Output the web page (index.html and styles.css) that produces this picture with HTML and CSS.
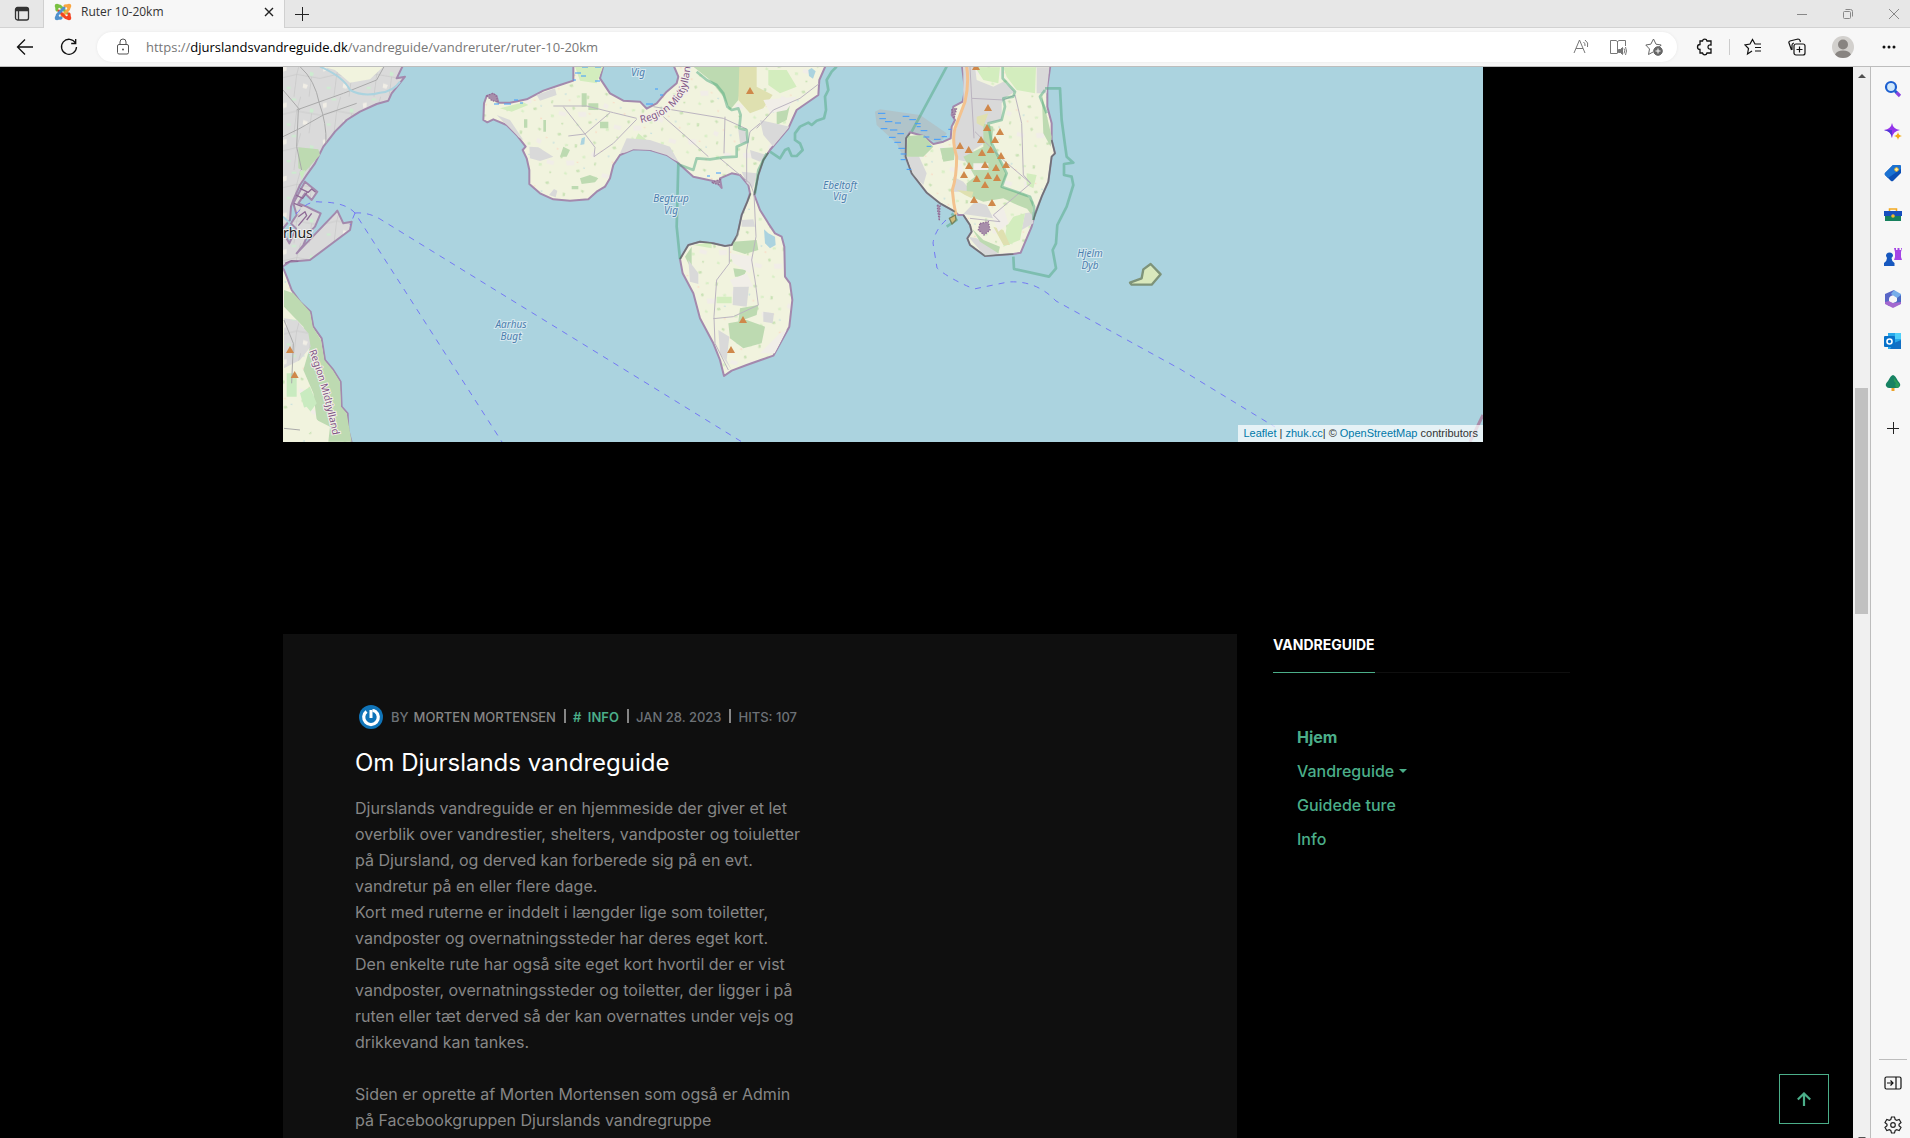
FILE: index.html
```html
<!DOCTYPE html>
<html lang="da">
<head>
<meta charset="utf-8">
<title>Ruter 10-20km</title>
<link rel="stylesheet" href="styles.css">
</head>
<body>
<header class="tabs">
  <button class="tab-menu" aria-label="Fanemenu"><svg width="16" height="16" viewBox="0 0 16 16" fill="none" stroke="#333" stroke-width="1.3"><rect x="1.5" y="1.5" width="13" height="12.500" rx="2"/><path d="M1.500 4.500h13M4.500 4.500v9.500" /><path d="M2 3h12" stroke-width="2.500"/></svg></button>
  <div class="tab">
    <svg width="18" height="18" viewBox="0 0 18 18" fill="none" stroke-width="3" stroke-linecap="round"><path d="M3 7c-1-3 2-5 4-3l6 6" stroke="#7ac143"/><path d="M11 3c3-1 5 2 3 4l-6 6" stroke="#f9a541"/><path d="M15 11c1 3-2 5-4 3L5 8" stroke="#f44321"/><path d="M7 15c-3 1-5-2-3-4l6-6" stroke="#5091cd"/><g stroke="none"><circle cx="3" cy="3" r="2.300" fill="#7ac143"/><circle cx="15" cy="3" r="2.300" fill="#f9a541"/><circle cx="15" cy="15" r="2.300" fill="#f44321"/><circle cx="3" cy="15" r="2.300" fill="#5091cd"/></g></svg>
    <span class="tab-title">Ruter 10-20km</span>
    <button aria-label="Luk fane"><svg width="10" height="10" viewBox="0 0 10 10" stroke="#222" stroke-width="1.400"><path d="M1 1l8 8M9 1l-8 8"/></svg></button>
  </div>
  <button class="new-tab" aria-label="Ny fane"><svg width="16" height="16" viewBox="0 0 16 16" stroke="#222"><path d="M1 8.500h14M8.500 1v14"/></svg></button>
  <div class="window-buttons">
    <button aria-label="Minimer"><svg width="10" height="10" viewBox="0 0 10 10" stroke="#888"><path d="M0 5.500h10"/></svg></button>
    <button aria-label="Gendan"><svg width="10" height="10" viewBox="0 0 10 10" fill="none" stroke="#888"><rect x=".5" y="2.500" width="7" height="7" rx="1"/><path d="M2.500 .5h5q2 0 2 2v5"/></svg></button>
    <button aria-label="Luk"><svg width="10" height="10" viewBox="0 0 10 10" stroke="#888"><path d="M0 0l10 10M10 0L0 10"/></svg></button>
  </div>
</header>
<nav class="toolbar" aria-label="Browser">
  <button aria-label="Tilbage"><svg width="18" height="18" viewBox="0 0 18 18" fill="none" stroke="#111" stroke-width="1.300"><path d="M17 9H2M9 1.500L1.500 9 9 16.500"/></svg></button>
  <button aria-label="Opdater"><svg width="18" height="18" viewBox="0 0 18 18" fill="none" stroke="#111" stroke-width="1.300"><path d="M15.500 5A7.500 7.500 0 1 0 16.500 9M15.700 1v4.500h-4.500"/></svg></button>
  <div class="address">
    <svg width="14" height="18" viewBox="0 0 14 18" fill="none" stroke="#555"><rect x="1.500" y="6.500" width="11" height="9.500" rx="1.500"/><path d="M4 6.500V4a3 3 0 0 1 6 0v2.500"/><circle cx="7" cy="11.500" r="1" fill="#555" stroke="none"/></svg>
    <a class="url" href="#">https://<b>djurslandsvandreguide.dk</b>/vandreguide/vandreruter/ruter-10-20km</a>
    <button aria-label="Læs højt"><svg width="18" height="18" viewBox="0 0 18 18" fill="none" stroke="#777"><path d="M1 15L6.500 2 12 15M3 10.500h7"/><path d="M10.500 4q2 1.500 1.500 4M12 2q4 2.500 2.500 7"/></svg></button>
    <button aria-label="Fordybende læser"><svg width="18" height="18" viewBox="0 0 18 18" fill="none" stroke="#777"><path d="M8.500 3v12.500M8 15.500H1.500v-13H7l1.500 1 1.500-1h6.500V8"/><path d="M9.500 11.500h2l2-2v7l-2-2h-2z" fill="#777"/><path d="M15 10.500q1.500 2 0 5M16.500 9q2 4 0 8"/></svg></button>
    <button aria-label="Føj til favoritter"><svg width="18" height="18" viewBox="0 0 18 18" fill="none" stroke="#666"><path d="M8 14l-4.500 2.500 1-5.500L.8 7l5-.8L8.500 1l2.500 5.200 5.200.8-2 2"/><circle cx="13" cy="13" r="4.300" fill="#666"/><path d="M10.500 13h5M13 10.500v5" stroke="#fff"/></svg></button>
  </div>
  <button class="puzzle" aria-label="Udvidelser"><svg width="18" height="18" viewBox="0 0 18 18" fill="none" stroke="#111" stroke-width="1.300"><path d="M4 3h2.500a2.300 2.300 0 0 1 4.500 0H15v4q-3-.5-3 2t3 2v4h-4a2.300 2.300 0 0 1-4.500 0H4v-3.500a2.500 2.500 0 0 1 0-5z"/></svg></button>
  <span class="separator"></span>
  <button aria-label="Favoritter"><svg width="18" height="18" viewBox="0 0 18 18" fill="none" stroke="#111" stroke-width="1.200"><path d="M8 13l-4.500 3 1-5.500L1 7l5-1 2.500-4.500L11 6h6M11 9.500h6M11 13h6"/></svg></button>
  <button class="collections" aria-label="Samlinger"><svg width="18" height="18" viewBox="0 0 18 18" fill="none" stroke="#111" stroke-width="1.200"><rect x="6" y="6" width="11" height="11" rx="2"/><path d="M11.500 8.500v6M8.500 11.500h6M3.500 12L1 5q-.5-1.500 1-2l8-2q1.500 0 2 1.500l.5 1.500M6 5q-2 .5-2 2v5"/></svg></button>
  <button class="profile" aria-label="Profil"><svg width="22" height="22" viewBox="0 0 22 22" fill="#888481"><circle cx="11" cy="11" r="11" fill="#d2d0cd"/><circle cx="11" cy="8.500" r="5"/><path d="M3 18.500q2-4 8-4t8 4q-3 3.500-8 3.500t-8-3.500z"/></svg></button>
  <button class="more" aria-label="Mere"><svg width="14" height="4" viewBox="0 0 14 4" fill="#111"><circle cx="2" cy="2" r="1.500"/><circle cx="7" cy="2" r="1.500"/><circle cx="12" cy="2" r="1.500"/></svg></button>
</nav>
<div class="window">
  <main class="page">
    <div class="container">
      <section class="map">
        <svg class="map-canvas" viewBox="283 67 1200 375" role="img" aria-label="Kort over Djursland">
          <defs>
            <pattern id="fields" width="170" height="150" patternUnits="userSpaceOnUse" patternTransform="rotate(14)">
              <rect width="170" height="150" fill="#f1f3de"/>
              <path fill="#c9e2b5" d="M10 12l10-4 3 7-8 3zM70 30h6l2 9-7 2zM122 8l9 3-3 6-7-3zM35 75l6-3 4 6-6 5zM140 70h5v9h-5zM92 105l9-3 3 6-9 4zM15 128h6v5h-6z"/>
              <path fill="#d9efc6" d="M40 38l9-3 2 6-9 3zM100 60l8-3 2 8-8 2zM60 118l9 4-3 5-7-2zM148 112l9-2 2 8-9 2z"/>
              <path fill="#fadcc6" d="M88 80h5v4h-5zM20 55h5v4h-5zM120 128h5v5h-5zM150 30h5v4h-5z"/>
              <path fill="#f1ede8" d="M55 85l24-6 4 14-22 6zM126 40l14 3-2 13-14-4zM0 95h22v12H0z"/>
              <path fill="#a9d5df" d="M112 92h3v4h-3zM5 40h3v4h-3z"/>
            </pattern>
            <pattern id="town" width="120" height="110" patternUnits="userSpaceOnUse">
              <rect width="120" height="110" fill="#dadada"/>
              <path fill="#f1eee6" d="M8 20l12-3v14l-10 4zM70 70l14 5-5 11-11-3z"/>
              <path fill="#cdebd0" d="M35 5h14v6H35zM90 35l12 4-4 10-9-2zM20 80h12v7H20z"/>
              <path stroke="#c6c6c6" stroke-width="2" fill="none" d="M0 55l50-12 70 12M50 43l-8 67M62 0l-12 43M95 50l-8 60"/>
            </pattern>
            <path id="triangle" d="M0-11l12 21h-24z"/>
            <path id="regionNorth" d="M641 123Q668 117 681 98 691 86 691 50"/>
            <path id="regionSouth" d="M309 351Q324 390 334 442"/>
            <clipPath id="mols"><use href="#molsLand"/></clipPath>
          </defs>
          <rect x="283" y="67" width="1200" height="375" fill="#abd3df"/>

          <g transform="translate(280 60) scale(.333333)" stroke-linejoin="round">
            <!-- Aarhus and the coast south of it -->
            <g class="coast">
              <path fill="url(#town)" d="M0 10H372L350 55 375 50 335 100 325 122 290 132 240 155 200 180 165 215 130 260 105 310 80 345 60 375 40 420 33 440 30 480 9 505 0 510z"/>
              <path fill="url(#town)" d="M40 430L75 365 112 395 95 420 75 400 55 430 80 440 100 450 122 460 105 500 85 520 70 555 50 580 165 460 172 452 190 490 215 485 210 510 90 600 30 605 0 625V500L28 550 48 505 33 490 50 465z"/>
              <path fill="url(#fields)" d="M0 610L12 630 20 650 35 690 60 725 92 755 100 800 125 835 135 900 160 930 182 965 185 1040 203 1060 205 1110 217 1155H0z"/>
            </g>
            <path fill="none" stroke="#8f6b96" stroke-width="4" d="M48 405l20 10 15-20M42 430l25 10M60 385l25 12 10-10 12 10M55 470l20-15 5 12-25 30M80 480l15-20M15 610l20-8 20 2"/>
            <path fill="#bddab1" d="M55 262L115 268 120 285 75 335 55 325zM12 690L40 700 90 755 98 800 123 840 133 900 158 930 180 965 183 1040 200 1060 215 1145H145L150 1100 110 1080 100 1000 70 930 90 860 70 800 12 740z"/>
            <path fill="url(#town)" d="M12 775L50 780 85 820 92 860 60 900 12 925z"/>
            <path fill="#c9ebc0" d="M20 940h30v70H20zM60 1000l30-20 20 50-30 40zM58 335l18-5-10 30z"/>
            <path fill="#f1f3de" d="M130 20h180l-40 38-60 10-45-38zM20 1060l60-20 40 50-60 55H12z"/>
            <g fill="none" stroke="#a9a9a9" stroke-width="3">
              <path d="M60 20Q105 60 118 130 140 190 138 250M9 230L60 205 130 165 230 130M50 150L190 100 290 60 312 20M55 150L50 260 65 330M9 90L60 150M12 780L40 850 35 970M12 1105L60 1110"/>
              <path stroke="#abd3df" stroke-width="6" d="M120 20Q190 50 210 90 250 112 300 98 340 95 360 65M9 470L30 490"/>
            </g>

            <!-- Mols and Helgenæs -->
            <path id="molsLand" class="coast" fill="url(#fields)" d="M880 10L880 62 840 75 790 92 740 118 690 128 655 128 650 108 640 102 620 108 612 130 610 180 622 187 640 178 680 195 710 225 737 260 728 270 740 295 748 330 748 372 780 400 820 418 870 422 925 418 950 395 975 380 990 355 1000 315 1020 285 1060 268 1110 270 1160 285 1190 305 1240 350 1310 365 1325 384 1320 355 1355 340 1380 345 1405 375 1410 400 1402 425 1385 465 1372 525 1355 555 1335 558 1300 550 1260 545 1225 555 1200 597 1208 640 1240 700 1260 775 1300 850 1320 900 1332 948 1355 932 1400 915 1480 887 1528 800 1537 720 1530 670 1515 650 1513 560 1505 530 1485 520 1465 490 1440 450 1423 405 1435 345 1450 300 1470 270 1525 205 1550 150 1615 105 1618 60 1640 10H1178L1195 50 1190 70 1160 95 1130 130 1100 146 1080 125 1030 122 990 100 960 55 972 10z"/>
            <g clip-path="url(#mols)">
              <path fill="#bddab1" d="M1240 20H1390L1385 60 1375 120 1350 150 1330 110 1290 60zM1490 150L1530 135 1520 180 1490 195zM1360 545L1430 540 1435 570 1395 582 1358 570zM1360 625L1400 630 1390 650 1365 650zM1380 745L1435 735 1430 765 1375 785zM1345 790L1400 780 1455 800 1445 850 1390 865 1350 835zM1235 560L1215 590 1235 630zM905 100h15v40h-15zM925 130h30v20h-30zM790 180h8v35h-8zM732 178h10v25h-10zM850 260l20 10-10 20h-20zM960 185h25v20h-25zM900 355l30-10 25 10-10 12-40 5zM875 378h20v10h-20z"/>
              <path fill="#dfe0b0" d="M1378 20H1430L1430 80 1478 105 1450 145 1410 160 1375 120z"/>
              <path fill="#d3edbe" d="M885 20H970L950 70 900 62zM1465 30H1520L1550 80 1500 100 1465 75zM1075 220l25 20-40 10zM1310 710h45v20h-45zM1240 555l55-8v18zM660 145l70-18 15 8-50 20z"/>
              <path fill="#d9d9d9" d="M770 105L825 85 830 105 780 122zM650 165L690 180 730 240 715 232 680 195zM748 260L775 262 820 290 780 303 750 295zM1040 235L1110 240 1170 260 1195 305 1110 270 1020 280zM1440 180L1530 200 1480 260 1450 225zM1410 270L1460 285 1440 305 1415 295zM1385 335L1430 340 1420 385 1400 370zM1385 480L1420 478 1425 500 1385 500zM1360 680L1407 678 1400 740 1358 735zM1450 755L1482 760 1478 790 1450 785zM1315 810L1348 830 1340 900 1355 930 1320 880zM1225 600L1255 640 1255 672 1230 665zM1370 540l-10-30 20 0zM1375 210h20l10 40h-25zM807 405l15-18 10 5-5 20z"/>
              <path fill="#f1eee8" d="M1350 580L1420 590 1410 640 1360 610zM1350 660l50-20 20 40-60 0zM1440 880l60-60 20-10-35 70zM1450 120L1550 110 1520 150 1470 160z"/>
              <path fill="#abd3df" d="M1585 30l10-6 12 10-8 22-12-8zM1452 508L1465 520 1485 530 1487 555 1470 565 1455 550zM905 235l10-4-2 22-12 2z"/>
              <path fill="none" stroke="#bbb4c0" stroke-width="3" d="M820 138H920L1000 158 1070 175M850 140L915 222 990 158M865 228L915 222 945 262 942 290 1000 250 1070 178M1120 140L1330 175 1400 207M1150 170L1230 240 1285 290M1335 170L1332 280M1400 370V270L1410 215 1440 190M1625 65L1560 115 1480 150 1430 205M1320 295L1410 370 1422 400 1428 530 1415 600 1425 660 1435 735 1360 770 1300 776M1348 560V610L1310 660 1302 770 1305 850 1345 930"/>
            </g>
            <path fill="#a78eaa" stroke="#8f6b96" stroke-width="4" stroke-dasharray="4 4" d="M620 108l18-8 10 6 6 20-18-4zM1295 368l28-12-8 18z"/>
            <g fill="none" stroke="#50aa82" stroke-opacity=".5" stroke-width="8" stroke-linejoin="round">
              <path d="M1250 35L1280 60 1310 75 1330 100 1342 140 1355 150 1375 145 1382 165 1378 205 1400 210 1403 245 1370 260 1370 290 1330 292 1290 298 1250 295 1240 330 1200 315M1195 308L1190 500 1200 597M1470 275L1500 295 1515 270 1525 265 1535 288 1550 288 1568 270 1560 250 1545 240 1545 220 1560 200 1585 188 1595 195 1610 182 1632 175 1638 150 1635 110 1645 90 1640 60 1655 35 1670 20M1460 280L1435 330 1425 400"/>
              <path stroke="#4e6353" stroke-opacity=".6" stroke-width="5" d="M1200 597L1225 555 1260 545 1300 550 1335 558 1355 555 1372 525 1385 465 1402 425 1412 400M1423 405L1435 345 1450 300 1465 278"/>
            </g>
          </g>

          <g transform="translate(860 60) scale(.333333)" stroke-linejoin="round">
            <!-- Ebeltoft -->
            <path fill="#b0c4ca" d="M45 155L60 148 180 165 260 220 240 250 160 220 150 330 110 250 50 195z"/>
            <path class="coast" fill="url(#fields)" d="M305 10L315 90 308 125 280 140 275 165 285 180 275 200 272 235 250 245 220 252 190 228 150 217 138 235 137 290 155 340 200 398 240 430 285 455 295 465 310 465 330 495 335 515 322 535 330 555 375 588 460 582 482 578 515 500 525 460 545 410 565 365 575 290 585 280 575 240 575 190 562 140 562 80 572 10z"/>
            <path fill="#d9d9d9" d="M310 20H345L350 60 400 80 430 65 465 95 440 110 425 130 425 180 380 190 390 240 340 270 345 310 295 300 280 235 300 170 310 130zM530 22H568L560 100 530 100zM140 290L175 285 200 340 190 375 160 345zM345 425L380 435 400 475 310 462zM325 530L350 535 420 580 375 588zM495 460L520 455 520 490 485 510zM280 350l30 15 25 30-55 0z"/>
            <path fill="#bddab1" d="M142 228L190 225 220 260 190 290 140 290zM240 265L285 262 282 300 250 305zM370 190L400 200 395 260 420 300 440 345 425 380 500 405 520 430 510 450 460 430 430 415 370 425 320 405 320 370 345 350 310 290 370 260zM335 505L370 540 420 560 415 580 360 545zM500 410l20 15-5 40-15-20zM545 100L575 230 572 260 550 220z"/>
            <path fill="#d3edbe" d="M430 22H528L525 100 470 90 440 50zM345 22H420L415 70 370 60zM460 470L495 460 480 540 430 560 440 500zM500 340l30 5-10 40-20-10z"/>
            <path fill="#dfe0b0" d="M350 170L385 160 370 200 350 190zM400 500L430 510 450 555 430 555zM290 390l50 5-5 20-20-10z"/>
            <path fill="#f1eee8" d="M340 310h45v20h-45zM395 465l35-25 15 50-30 25zM285 320l20-10 5 30z"/>
            <path fill="none" stroke="#bbb4c0" stroke-width="3" d="M330 20L335 115 430 120 465 105M335 115L342 235M465 105L485 190 490 345 512 370 400 465M345 215L430 300 512 370M400 465L420 485 330 475"/>
            <path fill="none" stroke="#f3c28e" stroke-width="9" d="M320 20Q328 70 315 125 300 165 285 205 275 240 290 290 290 350 277 390 280 430 288 465"/>
            <g fill="none" stroke="#50aa82" stroke-opacity=".5" stroke-width="8">
              <path d="M260 20L155 215M428 20V55L465 95 460 110 430 115 435 140 425 180 385 190 395 250 440 340 425 380 510 410 522 440 520 480M555 85H600L605 180 615 255 620 290 640 308 612 312 612 345 635 350 640 375 620 440 592 495 588 550 578 570 588 625 567 650 462 627 460 590M260 500L290 480 275 460M555 90L540 110 560 160"/>
              <path stroke="#4e6353" stroke-opacity=".6" stroke-width="5" d="M150 220L138 235 137 290 155 340 200 398 240 430 285 455M310 465L330 495 335 515 322 535 330 555 375 588 460 582M520 480L545 410 565 365 575 290 585 280 575 240"/>
            </g>
            <path fill="#a78eaa" stroke="#8f6b96" stroke-width="4" stroke-dasharray="4 4" d="M360 490L385 485 390 510 372 525 355 510zM275 150l15-5-8 30zM232 435l8 2-2 45-5-30z"/>
            <path fill="#cdbb79" stroke="#77825c" stroke-width="4" d="M268 475l18-10 2 15-12 12z"/>
            <path fill="#d9e8bd" stroke="#7e9379" stroke-width="7" d="M810 668L845 655 850 628 872 612 902 643 875 674H815z"/>
            <path fill="none" stroke="#3d9cff" stroke-width="3" d="M54 160h22M58 176h20M75 185h22M105 189h18M128 169h20M148 179h20M165 191h17M62 206h20M90 210h22M112 221h20M87 232h20M103 247h20M115 265h20M122 282h17M122 299h15M140 328h14M182 212h20M190 231h18M222 238h20M245 230h16M200 259h14M265 208h8M170 200h12"/>
            <g fill="#cf884a">
              <use href="#triangle" x="348" y="20"/><use href="#triangle" x="384" y="143"/><use href="#triangle" x="381" y="203"/><use href="#triangle" x="420" y="215"/><use href="#triangle" x="363" y="239"/><use href="#triangle" x="405" y="239"/><use href="#triangle" x="300" y="257"/><use href="#triangle" x="326" y="269"/><use href="#triangle" x="366" y="278"/><use href="#triangle" x="392" y="269"/><use href="#triangle" x="423" y="287"/><use href="#triangle" x="327" y="317"/><use href="#triangle" x="375" y="314"/><use href="#triangle" x="408" y="323"/><use href="#triangle" x="438" y="314"/><use href="#triangle" x="312" y="344"/><use href="#triangle" x="350" y="356"/><use href="#triangle" x="384" y="347"/><use href="#triangle" x="411" y="353"/><use href="#triangle" x="375" y="374"/><use href="#triangle" x="342" y="419"/><use href="#triangle" x="396" y="428"/>
              <use href="#triangle" x="-330" y="92"/><use href="#triangle" x="-351" y="779"/><use href="#triangle" x="-387" y="869"/><use href="#triangle" x="-1710" y="869"/><use href="#triangle" x="-1696" y="944"/>
            </g>
          </g>

          <!-- shallow water marks -->
          <path fill="none" stroke="#3d9cff" d="M494 104h5M504 104h7M514 100h4M520 103h3M575 73h6M581 76h5M582 67h6M595 67h6M573 80h3M595 81h5M655 89h3M660 95h3M646 104h7M707 176h3M716 173h5"/>
          <!-- ferry routes -->
          <g fill="none" stroke="#7478f5" stroke-dasharray="6 6">
            <path d="M296 214Q308 200 320 202 345 202 355 213L502 442"/>
            <path d="M355 213Q368 212 380 219L742 442"/>
            <path d="M946 220Q935 230 933 243L937 268Q948 278 974 289L1008 282Q1036 280 1056 301L1180 369 1275 427"/>
            <path d="M355 213L350 225"/>
          </g>
          <path d="M1483 415L1470 442" stroke="#a98ba8" stroke-width="3"/>
          <g class="water-label">
            <text x="638" y="76">Vig</text>
            <text x="671" y="202">Begtrup</text><text x="671" y="214">Vig</text>
            <text x="840" y="189">Ebeltoft</text><text x="840" y="200">Vig</text>
            <text x="511" y="328">Aarhus</text><text x="511" y="340">Bugt</text>
            <text x="1090" y="257">Hjelm</text><text x="1090" y="269">Dyb</text>
          </g>
          <g class="region-label"><text><textPath href="#regionNorth">Region Midtjylland</textPath></text><text><textPath href="#regionSouth">Region Midtjylland</textPath></text></g>
          <text class="city-label" x="283" y="238">rhus</text>
        </svg>
        <p class="attribution"><a href="#">Leaflet</a> | <a href="#">zhuk.cc</a>| © <a href="#">OpenStreetMap</a> contributors</p>
      </section>

      <div class="columns">
        <article class="article">
          <div class="meta">
            <svg width="24" height="24" viewBox="0 0 24 24" fill="none"><circle cx="12" cy="12" r="12" fill="#1074b8"/><path d="M7.500 6.500a7.300 7.300 0 1 0 9 0q-1.500-1-3-1" stroke="#fff" stroke-width="3.200"/><path d="M12 5v8" stroke="#fff" stroke-width="3"/></svg>
            <span class="author">BY <b>MORTEN MORTENSEN</b></span>
            <a class="tag" href="#"># &nbsp;INFO</a>
            <span class="muted">JAN 28. 2023</span>
            <span class="muted">HITS: 107</span>
          </div>
          <h1>Om Djurslands vandreguide</h1>
          <p>Djurslands vandreguide er en hjemmeside der giver et let<br>overblik over vandrestier, shelters, vandposter og toiuletter<br>på Djursland, og derved kan forberede sig på en evt.<br>vandretur på en eller flere dage.<br>Kort med ruterne er inddelt i længder lige som toiletter,<br>vandposter og overnatningssteder har deres eget kort.<br>Den enkelte rute har også site eget kort hvortil der er vist<br>vandposter, overnatningssteder og toiletter, der ligger i på<br>ruten eller tæt derved så der kan overnattes under vejs og<br>drikkevand kan tankes.</p>
          <p>Siden er oprette af Morten Mortensen som også er Admin<br>på Facebookgruppen Djurslands vandregruppe</p>
        </article>
        <aside class="side">
          <h2><span>VANDREGUIDE</span></h2>
          <ul>
            <li><a class="active" href="#">Hjem</a></li>
            <li><a class="dropdown" href="#">Vandreguide</a></li>
            <li><a href="#">Guidede ture</a></li>
            <li><a href="#">Info</a></li>
          </ul>
        </aside>
      </div>
    </div>
    <button class="to-top" aria-label="Til toppen"><svg width="14" height="14" viewBox="0 0 14 14" fill="none" stroke="#4bae89" stroke-width="2.200"><path d="M7 14V2M.8 7.500L7 1.500l6.200 6"/></svg></button>
  </main>
  <div class="scrollbar">
    <svg class="arrow" width="8" height="4" viewBox="0 0 8 4" fill="#505050"><path d="M0 4l4-4 4 4z"/></svg>
    <div class="before"></div><div class="thumb"></div><div class="after"></div>
    <svg width="8" height="2" viewBox="0 0 8 2" fill="#505050"><path d="M0 1h8l-1 1H1z"/></svg>
  </div>
  <nav class="rail" aria-label="Sidepanel">
    <button aria-label="Søg"><svg width="18" height="18" viewBox="0 0 18 18" fill="none"><circle cx="7" cy="7" r="5" fill="#cfe7fb" stroke="#1c5fd0" stroke-width="2.200"/><path d="M11 11l2 2" stroke="#1c5fd0" stroke-width="3"/><path d="M12.500 12.500l3.500 3.500" stroke="#8a45e0" stroke-width="3.200"/></svg></button>
    <button aria-label="Opdag"><svg width="18" height="18" viewBox="0 0 18 18"><path d="M8 1q1 6 8 7-7 1-8 8-1-7-8-8 7-1 8-7z" fill="#9333ea"/><path d="M8 8v8q-1-7-8-8z" fill="#5136d8"/><path d="M14 10q.5 3.500 4 4-3.500.5-4 4-.5-3.500-4-4 3.500-.5 4-4z" fill="#f2ac16"/></svg></button>
    <button aria-label="Shopping"><svg width="18" height="18" viewBox="0 0 18 18"><path d="M9 1h7l1 1v7l-8 8q-1 .7-2 0l-6-6q-.7-1 0-2z" fill="#0c4fb5"/><path d="M9 1h7l1 1v3L4 14 1 11q-.7-1 0-2z" fill="#1b72d2"/><circle cx="12.500" cy="5.500" r="1.800" fill="#fff3ae" stroke="#f5b825"/></svg></button>
    <button aria-label="Værktøjer"><svg width="18" height="18" viewBox="0 0 18 18"><path d="M5.500 6V3h7v3" fill="none" stroke="#f2a922" stroke-width="1.500"/><path d="M1 9h16v6H1z" fill="#16805d"/><path d="M0 5h18v5H0z" fill="#174fbe"/><circle cx="9" cy="10" r="1.800" fill="#f4b92d"/></svg></button>
    <button aria-label="Spil"><svg width="18" height="18" viewBox="0 0 18 18"><path d="M10 0h2v2h1.500V0h2v2H17V0h1l-1 4v5l1 3h-8l1-3V4z" fill="#a444e5"/><path d="M2 8a3.500 3.500 0 1 1 7 0l-1.500 2q0 3 3 5v3H0v-3q3-2 3-5z" fill="#1758bf"/></svg></button>
    <button aria-label="Microsoft 365"><svg width="18" height="18" viewBox="0 0 18 18"><path d="M10 0L1 4v9l4 3V9q0-2 2-3l5-2z" fill="#5966c7"/><path d="M10 0l7 4v9l-2 2-2-7-6-4z" fill="#77aeea"/><path d="M13 8l4-3v8l-7 4-5-4 5-.5q3-.5 3-2.500z" fill="#496ac4"/><path d="M1 12l4-1 4 2 8-1v2l-8 4-8-4z" fill="#a368cf"/><path d="M7 6l5 1.500 1 3-4 2.500-3.500-2z" fill="#f7f7f7"/></svg></button>
    <button aria-label="Outlook"><svg width="18" height="18" viewBox="0 0 18 18"><path d="M4 1h13v16H4z" fill="#28a8ea"/><path d="M11 1h6v6h-6z" fill="#50d0fa"/><path d="M10 11l7-3v9H6z" fill="#126fc4"/><rect y="4" width="11" height="11" rx="1" fill="#0871c9"/><circle cx="5.500" cy="9.500" r="2.500" fill="none" stroke="#fff" stroke-width="1.600"/></svg></button>
    <button aria-label="Drop"><svg width="18" height="18" viewBox="0 0 18 18"><path d="M7.500 13h3v4h-3z" fill="#eca228"/><path d="M9 1q2 0 5 6 3 3 2 5-1 2-3 2H5q-2 0-3-2t2-5q3-6 5-6z" fill="#178263"/><path d="M10 4l5 6q1 3-2 4-3-2-1-5-3-2-2-5z" fill="#2a9c58"/></svg></button>
    <button class="add" aria-label="Tilføj"><svg width="14" height="14" viewBox="0 0 14 14" stroke="#222"><path d="M1 7.500h12M7.500 1v12"/></svg></button>
    <div class="rail-bottom">
      <button aria-label="Skjul sidepanel"><svg width="18" height="14" viewBox="0 0 18 14" fill="none" stroke="#111" stroke-width="1.200"><rect x="1" y="1" width="16" height="12" rx="1.500"/><path d="M12 1v12M3 7h6M6.500 4.500L9 7 6.500 9.500"/></svg></button>
      <button aria-label="Indstillinger"><svg width="18" height="18" viewBox="0 0 18 18" fill="none" stroke="#222" stroke-width="1.200"><path d="M7.500 1h3l.7 2.500 1.500.8 2.500-.8L17 6.500 15 8.200v1.600l2 1.700-1.800 3-2.500-.8-1.500.8-.7 2.500h-3l-.7-2.500-1.500-.8-2.500.8L1 11.500l2-1.700V8.200L1 6.500l1.800-3 2.500.8 1.500-.8z"/><circle cx="9" cy="9" r="2.300"/></svg></button>
    </div>
  </nav>
</div>
</body>
</html>
```
FILE: styles.css
```css
* { box-sizing: border-box; }

body {
  margin: 0;
  height: 100vh;
  display: flex;
  flex-direction: column;
  overflow: hidden;
  background: #f7f7f7;
  font-family: "Open Sans", "Noto Sans", sans-serif;
}

button {
  padding: 0;
  border: 0;
  background: none;
  display: flex;
  align-items: center;
  justify-content: center;
}

a { text-decoration: none; }

svg { flex: none; }

/* browser frame */
.tabs {
  flex: none;
  height: 28px;
  display: flex;
  align-items: center;
  background: #e7e7e7;
  border-bottom: 1px solid #d2d2d2;
}

.tab-menu { width: 43px; height: 24px; }

.tab {
  width: 242px;
  height: 28px;
  padding: 0 10px 4px 10px;
  display: flex;
  align-items: center;
  gap: 9px;
  background: #f7f7f7;
  border: solid #d0d0d0;
  border-width: 0 1px;
}

.tab-title { flex: 1; font-size: 12px; line-height: 16px; color: #333; }

.new-tab { width: 34px; height: 24px; }

.window-buttons { margin-left: auto; display: flex; }
.window-buttons button { width: 46px; height: 24px; }
.window-buttons button:last-child { width: 32px; margin-left: 7px; }

.toolbar {
  flex: none;
  height: 39px;
  padding: 0 14px 0 16px;
  display: flex;
  align-items: center;
  border-bottom: 1px solid #bdbdbd;
}

.toolbar > button:nth-child(2) { margin: 0 19px 0 26px; }

.address {
  flex: 1;
  height: 30px;
  padding: 0 14px 0 19px;
  display: flex;
  align-items: center;
  gap: 18px;
  background: #fff;
  border-radius: 15px;
  box-shadow: 0 0 3px #e6e6e6;
}

.url {
  flex: 1;
  margin-left: -2px;
  font-size: 13px;
  line-height: 20px;
  color: #777;
}
.url b { font-weight: 400; color: #000; }

.puzzle { margin: 0 15px 0 19px; }
.separator { width: 1px; height: 16px; margin-right: 14px; background: #ccc; }
.collections { margin: 0 26px; }
.profile { margin-right: 28px; }

.window {
  flex: 1;
  min-height: 0;
  display: grid;
  grid-template-columns: 1fr 18px 39px;
}

.scrollbar {
  padding-top: 7px;
  display: flex;
  flex-direction: column;
  align-items: center;
  background: #f0f0f0;
  border-right: 1px solid #bdbdbd;
}
.arrow { margin-bottom: 7px; }
.before { flex: 303; }
.thumb { flex: 226; width: 13px; background: #c1c1c1; }
.after { flex: 522; }

.rail {
  padding: 13px 0 0 5px;
  display: flex;
  flex-direction: column;
  align-items: center;
  gap: 24px;
}
.rail button { width: 18px; height: 18px; }
.rail .add { margin-top: 3px; }
.rail-bottom {
  margin-top: auto;
  width: 28px;
  height: 79px;
  padding-top: 14px;
  display: flex;
  flex-direction: column;
  align-items: center;
  gap: 24px;
  border-top: 1px solid #bdbdbd;
}

/* web page */
.page {
  position: relative;
  overflow: hidden;
  background: #000;
  color: #868686;
  font-family: Inter, "Open Sans", sans-serif;
  font-size: 16px;
  line-height: 26px;
}

.container { max-width: 1287px; margin: 0 auto; }

.map { position: relative; max-width: 1200px; }
.map-canvas { display: block; width: 100%; height: auto; }

.coast > path, path.coast { stroke: #a389ad; stroke-width: 6px; }

.water-label {
  font: italic 10px "Noto Sans", sans-serif;
  text-anchor: middle;
  fill: #4c7fae;
  stroke: #d5e8ef;
  stroke-width: 2px;
  paint-order: stroke;
}

.region-label {
  font: 10px "Noto Sans", sans-serif;
  fill: #7e5583;
  stroke: #f3efea;
  stroke-width: 2px;
  paint-order: stroke;
}

.city-label {
  font: 14px "Noto Sans", sans-serif;
  fill: #222;
  stroke: #eee;
  stroke-width: 2px;
  paint-order: stroke;
}

.attribution {
  position: absolute;
  right: 0;
  bottom: 0;
  margin: 0;
  padding: 0 5px;
  background: rgba(255, 255, 255, .7);
  color: #333;
  font: 11px/17px "Liberation Sans", Arial, sans-serif;
}
.attribution a { color: #0078a8; }

.columns {
  margin-top: 192px;
  display: grid;
  grid-template-columns: 954fr 297fr;
  gap: 36px;
}

.article { padding: 69px 72px; background: #0f0f0f; white-space: nowrap; }

.meta {
  display: flex;
  align-items: center;
  height: 28px;
  font-size: 13px;
  line-height: 16px;
}
.meta svg { margin: 0 8px 0 4px; }
.meta b { font-weight: 500; }
.author, .muted { font-weight: 500; color: #6d7277; }
.author b { color: #868686; }
.tag { font-weight: 600; color: #4bae89; }
.meta > * + span, .meta > a { display: flex; gap: 5px; }
.tag::before, .muted::before {
  content: "";
  width: 2px;
  height: 14px;
  margin: 0 2px 0 8px;
  background: #868686;
}

h1 {
  margin: 16px 0 16px;
  font-size: 24px;
  line-height: 32px;
  font-weight: 400;
  color: #fff;
}

.article p { margin: 0 0 26px; }

.side h2 {
  margin: 0 0 47px;
  font-size: 14px;
  line-height: 22px;
  font-weight: 700;
  color: #fff;
  border-bottom: 1px solid #0f0f0f;
}
.side h2 span {
  display: inline-block;
  padding-bottom: 16px;
  margin-bottom: -1px;
  border-bottom: 1px solid #4bae89;
}

.side ul { margin: 0; padding: 0 0 0 24px; list-style: none; }
.side li { height: 34px; line-height: 34px; }
.side a { color: #4bae89; font-weight: 500; }
.side .active { font-weight: 700; }
.dropdown::after {
  content: "";
  display: inline-block;
  margin-left: 5px;
  vertical-align: 4px;
  border: solid transparent;
  border-width: 4px 4px 0;
  border-top-color: #4bae89;
}

.to-top {
  position: absolute;
  right: 24px;
  bottom: 14px;
  width: 50px;
  height: 50px;
  background: #000;
  border: 1px solid #4bae89;
}
```
